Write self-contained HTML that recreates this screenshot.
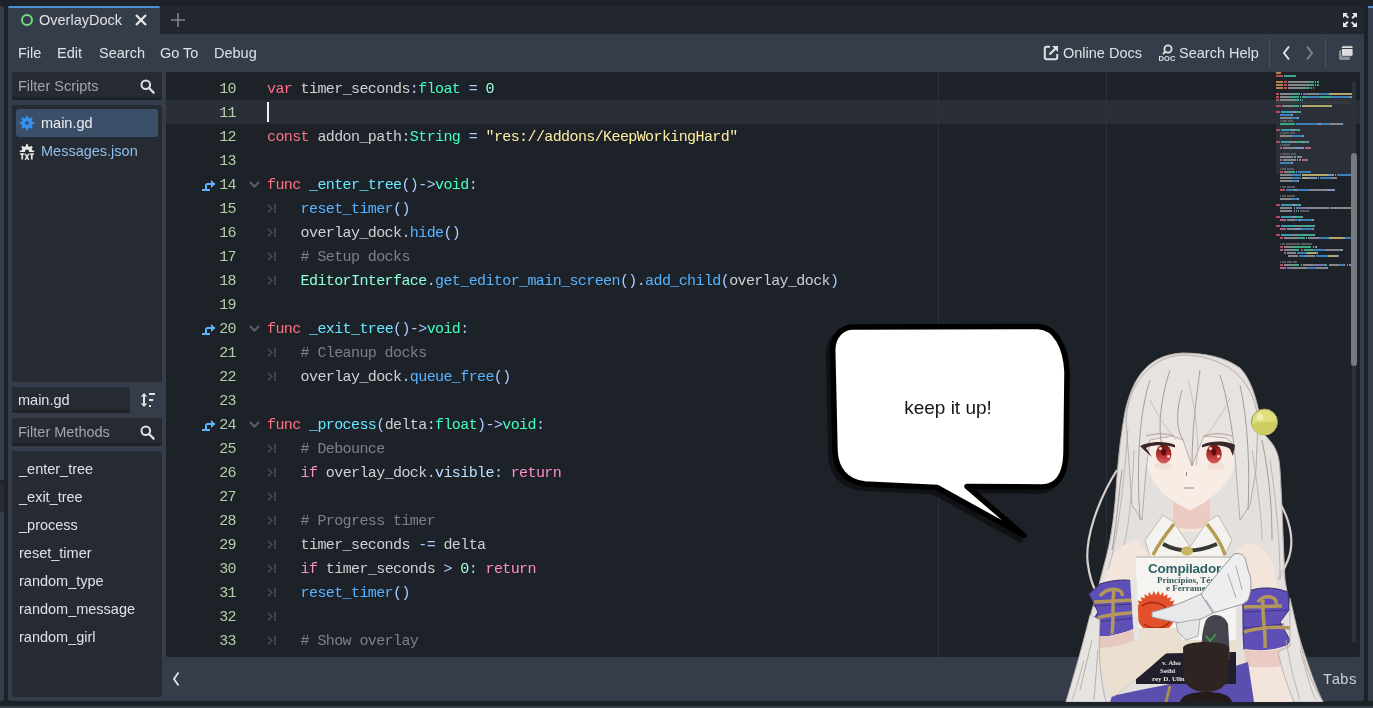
<!DOCTYPE html>
<html><head><meta charset="utf-8">
<style>
*{margin:0;padding:0;box-sizing:border-box}
html,body{width:1373px;height:708px;overflow:hidden;background:#1d2128;-webkit-font-smoothing:antialiased;font-family:"Liberation Sans",sans-serif;position:relative}
.a{position:absolute}
.ui{font-family:"Liberation Sans",sans-serif;font-size:14.5px;color:#dfe1e4;white-space:nowrap;line-height:18px}
.panel{background:#363d4a}
.field{background:#262a32;border-radius:2px;border-bottom:3px solid #1f2329}
#mm i{position:absolute;height:2px;display:block}
.mono{font-family:"Liberation Mono",monospace;white-space:pre}
#code{position:absolute;left:166px;top:72px;width:1194px;height:585px;background:#1d2229;border-radius:2px;overflow:hidden}
.ln{position:absolute;left:0;width:70px;text-align:right;font-family:"Liberation Mono",monospace;font-size:15px;letter-spacing:-0.6px;color:#b2cfa8;height:24px;line-height:24px}
.cl{position:absolute;left:101px;font-family:"Liberation Mono",monospace;font-size:15px;letter-spacing:-0.6px;color:#cdcfd2;white-space:pre;height:24px;line-height:24px}
.k{color:#ff7085}.fd{color:#66e6ff}.s{color:#abc9ff}.t{color:#42ffc2}.f{color:#57b3ff}.c{color:#7d8085}.e{color:#8fffdb}.cf{color:#ff8ccc}.n{color:#a1ffe0}.st{color:#ffeda1}.m{color:#bce0ff}
</style></head><body><div id="root" style="position:absolute;left:0;top:0;width:1373px;height:708px;will-change:transform">
<!-- left strip -->
<div class="a panel" style="left:0;top:6px;width:4px;height:695px;border-radius:0 3px 3px 0"></div>
<div class="a" style="left:0;top:480px;width:4px;height:4px;background:#1d2128"></div>
<div class="a" style="left:0;top:484px;width:4px;height:28px;background:#272c35"></div>
<!-- right strip -->
<div class="a panel" style="left:1368px;top:6px;width:5px;height:695px"></div>
<div class="a" style="left:1368px;top:6px;width:5px;height:2px;background:#4d90cf"></div>
<!-- bottom strip -->
<div class="a panel" style="left:0;top:706px;width:1373px;height:2px"></div>
<!-- main panel -->
<div class="a panel" style="left:8px;top:6px;width:1356px;height:695px;border-radius:3px"></div>
<!-- tab bar bg -->
<div class="a" style="left:8px;top:6px;width:1356px;height:28px;background:#22262e;border-radius:3px 3px 0 0"></div>
<!-- tab -->
<div class="a panel" style="left:8px;top:6px;width:152px;height:28px;border-radius:3px 3px 0 0"></div>
<div class="a" style="left:8px;top:6px;width:152px;height:2px;background:#4d90cf;border-radius:2px 2px 0 0"></div>
<div class="a" style="left:21px;top:14px;width:12px;height:12px;border:2px solid #6ee07a;border-radius:50%"></div>
<div class="a ui" style="left:39px;top:11px;color:#dfe1e4">OverlayDock</div>
<svg class="a" style="left:134px;top:13px" width="14" height="14" viewBox="0 0 14 14"><path d="M2 2L12 12M12 2L2 12" stroke="#e8e8e8" stroke-width="2.2"/></svg>
<svg class="a" style="left:171px;top:13px" width="14" height="14" viewBox="0 0 14 14"><path d="M7 0V14M0 7H14" stroke="#80848c" stroke-width="1.6"/></svg>
<svg class="a" style="left:1342px;top:12px" width="16" height="16" viewBox="0 0 16 16" fill="#e8e8e8"><path d="M1 1h5l-1.6 1.6 2.6 2.6-1.4 1.4-2.6-2.6L1 6z M15 1v5l-1.6-1.6-2.6 2.6-1.4-1.4 2.6-2.6L10 1z M1 15v-5l1.6 1.6 2.6-2.6 1.4 1.4-2.6 2.6L6 15z M15 15h-5l1.6-1.6-2.6-2.6 1.4-1.4 2.6 2.6L15 10z"/></svg>

<!-- menu -->
<div class="a ui" style="left:18px;top:44px">File</div>
<div class="a ui" style="left:57px;top:44px">Edit</div>
<div class="a ui" style="left:99px;top:44px">Search</div>
<div class="a ui" style="left:160px;top:44px">Go To</div>
<div class="a ui" style="left:214px;top:44px">Debug</div>

<div class="a ui" style="left:1063px;top:44px">Online Docs</div>
<div class="a ui" style="left:1179px;top:44px">Search Help</div>
<div class="a" style="left:1269px;top:38px;width:1px;height:30px;background:#4a505c"></div>
<div class="a" style="left:1325px;top:38px;width:1px;height:30px;background:#4a505c"></div>

<!-- left panel -->
<div class="a field" style="left:12px;top:72px;width:150px;height:28px"></div>
<div class="a ui" style="left:18px;top:77px;color:#a3a6ab">Filter Scripts</div>
<div class="a" style="left:12px;top:105px;width:150px;height:277px;background:#262a32;border-radius:2px"></div>
<div class="a" style="left:16px;top:109px;width:142px;height:28px;background:#3b4f68;border-radius:3px"></div>
<div class="a ui" style="left:41px;top:114px;color:#eceef0">main.gd</div>
<div class="a ui" style="left:41px;top:142px;color:#8ec0ef">Messages.json</div>

<div class="a field" style="left:12px;top:387px;width:118px;height:26px"></div>
<div class="a ui" style="left:18px;top:391px">main.gd</div>
<div class="a field" style="left:12px;top:418px;width:150px;height:28px"></div>
<div class="a ui" style="left:18px;top:423px;color:#a3a6ab">Filter Methods</div>
<div class="a" style="left:12px;top:451px;width:150px;height:246px;background:#262a32;border-radius:2px"></div>
<div class="a ui" style="left:19px;top:460px">_enter_tree</div>
<div class="a ui" style="left:19px;top:488px">_exit_tree</div>
<div class="a ui" style="left:19px;top:516px">_process</div>
<div class="a ui" style="left:19px;top:544px">reset_timer</div>
<div class="a ui" style="left:19px;top:572px">random_type</div>
<div class="a ui" style="left:19px;top:600px">random_message</div>
<div class="a ui" style="left:19px;top:628px">random_girl</div>


<!-- gear main.gd -->
<svg class="a" style="left:19px;top:115px" width="16" height="16" viewBox="0 0 16 16"><path fill-rule="evenodd" fill="#3592ee" d="M6.74 2.75 L7.09 0.76 L8.91 0.76 L9.26 2.75 L10.82 3.40 L12.47 2.23 L13.77 3.53 L12.60 5.18 L13.25 6.74 L15.24 7.09 L15.24 8.91 L13.25 9.26 L12.60 10.82 L13.77 12.47 L12.47 13.77 L10.82 12.60 L9.26 13.25 L8.91 15.24 L7.09 15.24 L6.74 13.25 L5.18 12.60 L3.53 13.77 L2.23 12.47 L3.40 10.82 L2.75 9.26 L0.76 8.91 L0.76 7.09 L2.75 6.74 L3.40 5.18 L2.23 3.53 L3.53 2.23 L5.18 3.40Z M8 6.1A1.9 1.9 0 1 0 8 9.9A1.9 1.9 0 1 0 8 6.1Z"/></svg>
<!-- txt gear -->
<svg class="a" style="left:19px;top:142px" width="16" height="18" viewBox="0 0 16 18"><defs><clipPath id="gc"><rect x="0" y="0" width="16" height="10"/></clipPath></defs><path clip-path="url(#gc)" fill-rule="evenodd" fill="#e6e6e6" d="M6.74 4.35 L7.09 2.36 L8.91 2.36 L9.26 4.35 L10.82 5.00 L12.47 3.83 L13.77 5.13 L12.60 6.78 L13.25 8.34 L15.24 8.69 L15.24 10.51 L13.25 10.86 L12.60 12.42 L13.77 14.07 L12.47 15.37 L10.82 14.20 L9.26 14.85 L8.91 16.84 L7.09 16.84 L6.74 14.85 L5.18 14.20 L3.53 15.37 L2.23 14.07 L3.40 12.42 L2.75 10.86 L0.76 10.51 L0.76 8.69 L2.75 8.34 L3.40 6.78 L2.23 5.13 L3.53 3.83 L5.18 5.00Z M8 7.6A2 2 0 1 0 8 11.6A2 2 0 1 0 8 7.6Z"/><g fill="none" stroke="#e6e6e6" stroke-width="1.7"><path d="M1 12H5.4M3.2 12V17.6M10.6 12H15M12.8 12V17.6"/><path d="M6.2 11.8L9.8 17.8M9.8 11.8L6.2 17.8" stroke-width="1.5"/></g></svg>
<!-- search icons -->
<svg class="a" style="left:140px;top:79px" width="15" height="15" viewBox="0 0 15 15"><circle cx="5.8" cy="5.8" r="4.3" stroke="#e0e0e0" stroke-width="2" fill="none"/><path d="M8.8 8.8L13.6 13.6" stroke="#e0e0e0" stroke-width="2.2" stroke-linecap="round"/></svg>
<svg class="a" style="left:140px;top:425px" width="15" height="15" viewBox="0 0 15 15"><circle cx="5.8" cy="5.8" r="4.3" stroke="#e0e0e0" stroke-width="2" fill="none"/><path d="M8.8 8.8L13.6 13.6" stroke="#e0e0e0" stroke-width="2.2" stroke-linecap="round"/></svg>
<!-- sort icon -->
<svg class="a" style="left:140px;top:392px" width="17" height="16" viewBox="0 0 17 16" fill="#e4e4e4"><path d="M4 1L7.2 4.6H5V11.4H7.2L4 15L0.8 11.4H3V4.6H0.8Z"/><rect x="9" y="1" width="6" height="2"/><rect x="9" y="7" width="4.2" height="2"/><rect x="9" y="13" width="2" height="2"/></svg>
<!-- online docs icon -->
<svg class="a" style="left:1043px;top:45px" width="16" height="16" viewBox="0 0 16 16"><path d="M7 1.8H3.5Q1.8 1.8 1.8 3.5V12.5Q1.8 14.2 3.5 14.2H12.5Q14.2 14.2 14.2 12.5V9" stroke="#e0e0e0" stroke-width="2" fill="none"/><path d="M6.5 9.5L12.5 3.5" stroke="#e0e0e0" stroke-width="2.2"/><path d="M9 1H15V7Z" fill="#e0e0e0"/></svg>
<!-- doc search icon -->
<svg class="a" style="left:1158px;top:44px" width="18" height="18" viewBox="0 0 18 18"><circle cx="10" cy="5" r="3.6" stroke="#e0e0e0" stroke-width="1.8" fill="none"/><path d="M7.6 7.4L5 10" stroke="#e0e0e0" stroke-width="2"/><text x="9" y="17" text-anchor="middle" font-family="Liberation Sans" font-weight="bold" font-size="7.6" fill="#e0e0e0">DOC</text></svg>
<!-- arrows -->
<svg class="a" style="left:1281px;top:45px" width="10" height="16" viewBox="0 0 10 16"><path d="M8 1.5L3 8L8 14.5" stroke="#e4e4e4" stroke-width="2" fill="none"/></svg>
<svg class="a" style="left:1305px;top:45px" width="10" height="16" viewBox="0 0 10 16"><path d="M2 1.5L7 8L2 14.5" stroke="#7c8088" stroke-width="2" fill="none"/></svg>
<!-- window icon -->
<svg class="a" style="left:1338px;top:45px" width="17" height="17" viewBox="0 0 17 17"><rect x="1" y="5" width="11" height="10" rx="1.5" fill="#8e8f92"/><rect x="3.5" y="0.8" width="11.5" height="10.5" rx="1.5" fill="#dedede" stroke="#363d4a" stroke-width="0.8"/><rect x="3.5" y="3" width="11.5" height="1" fill="#363d4a"/></svg>
<!-- bottom left arrow -->
<svg class="a" style="left:171px;top:671px" width="10" height="16" viewBox="0 0 10 16"><path d="M7.5 1.5L3 8L7.5 14.5" stroke="#e4e4e4" stroke-width="1.8" fill="none"/></svg>

<!-- code editor -->
<div id="code">
<div class="a" style="left:0;top:28px;width:1194px;height:24px;background:#2a2e36"></div>
<div class="a" style="left:772px;top:0;width:1px;height:585px;background:#2c3039"></div>
<div class="a" style="left:940px;top:0;width:1px;height:585px;background:#2c3039"></div>
<div class="a" style="left:101px;top:30px;width:1.5px;height:20px;background:#f0f0f0"></div>
<div class="ln" style="top:6px">10</div>
<div class="cl" style="top:6px"><span class="k">var</span> timer_seconds<span class="s">:</span><span class="t">float</span><span class="s"> = </span><span class="n">0</span></div>
<div class="ln" style="top:30px">11</div>
<div class="cl" style="top:30px"></div>
<div class="ln" style="top:54px">12</div>
<div class="cl" style="top:54px"><span class="k">const</span> addon_path<span class="s">:</span><span class="t">String</span><span class="s"> = </span><span class="st">"res://addons/KeepWorkingHard"</span></div>
<div class="ln" style="top:78px">13</div>
<div class="cl" style="top:78px"></div>
<div class="ln" style="top:102px">14</div>
<div class="cl" style="top:102px"><span class="k">func</span> <span class="fd">_enter_tree</span><span class="s">()-&gt;</span><span class="t">void</span><span class="s">:</span></div>
<svg class="a" style="left:36px;top:107px" width="14" height="12" viewBox="0 0 14 12" fill="#5cb3ff"><path d="M0 10h8v2H0z M3 11V6.5Q3 4 5.5 4H9V1l4.5 4L9 9V6H5.5Q5 6 5 6.5V11z"/></svg>
<svg class="a" style="left:83px;top:109px" width="11" height="7" viewBox="0 0 11 7"><path d="M1 1L5.5 5.5L10 1" stroke="#5a5e66" stroke-width="2.2" fill="none"/></svg>
<div class="ln" style="top:126px">15</div>
<div class="cl" style="top:126px">    <span class="f">reset_timer</span><span class="s">()</span></div>
<svg class="a" style="left:101px;top:132px" width="10" height="9" viewBox="0 0 10 9"><path d="M1.2 0.8L4.6 4.5L1.2 8.2" stroke="#3c4350" stroke-width="2" fill="none"/><rect x="7" y="0" width="2" height="9" fill="#3c4350"/></svg>
<div class="ln" style="top:150px">16</div>
<div class="cl" style="top:150px">    overlay_dock<span class="s">.</span><span class="f">hide</span><span class="s">()</span></div>
<svg class="a" style="left:101px;top:156px" width="10" height="9" viewBox="0 0 10 9"><path d="M1.2 0.8L4.6 4.5L1.2 8.2" stroke="#3c4350" stroke-width="2" fill="none"/><rect x="7" y="0" width="2" height="9" fill="#3c4350"/></svg>
<div class="ln" style="top:174px">17</div>
<div class="cl" style="top:174px">    <span class="c"># Setup docks</span></div>
<svg class="a" style="left:101px;top:180px" width="10" height="9" viewBox="0 0 10 9"><path d="M1.2 0.8L4.6 4.5L1.2 8.2" stroke="#3c4350" stroke-width="2" fill="none"/><rect x="7" y="0" width="2" height="9" fill="#3c4350"/></svg>
<div class="ln" style="top:198px">18</div>
<div class="cl" style="top:198px">    <span class="e">EditorInterface</span><span class="s">.</span><span class="f">get_editor_main_screen</span><span class="s">().</span><span class="f">add_child</span><span class="s">(</span>overlay_dock<span class="s">)</span></div>
<svg class="a" style="left:101px;top:204px" width="10" height="9" viewBox="0 0 10 9"><path d="M1.2 0.8L4.6 4.5L1.2 8.2" stroke="#3c4350" stroke-width="2" fill="none"/><rect x="7" y="0" width="2" height="9" fill="#3c4350"/></svg>
<div class="ln" style="top:222px">19</div>
<div class="cl" style="top:222px"></div>
<div class="ln" style="top:246px">20</div>
<div class="cl" style="top:246px"><span class="k">func</span> <span class="fd">_exit_tree</span><span class="s">()-&gt;</span><span class="t">void</span><span class="s">:</span></div>
<svg class="a" style="left:36px;top:251px" width="14" height="12" viewBox="0 0 14 12" fill="#5cb3ff"><path d="M0 10h8v2H0z M3 11V6.5Q3 4 5.5 4H9V1l4.5 4L9 9V6H5.5Q5 6 5 6.5V11z"/></svg>
<svg class="a" style="left:83px;top:253px" width="11" height="7" viewBox="0 0 11 7"><path d="M1 1L5.5 5.5L10 1" stroke="#5a5e66" stroke-width="2.2" fill="none"/></svg>
<div class="ln" style="top:270px">21</div>
<div class="cl" style="top:270px">    <span class="c"># Cleanup docks</span></div>
<svg class="a" style="left:101px;top:276px" width="10" height="9" viewBox="0 0 10 9"><path d="M1.2 0.8L4.6 4.5L1.2 8.2" stroke="#3c4350" stroke-width="2" fill="none"/><rect x="7" y="0" width="2" height="9" fill="#3c4350"/></svg>
<div class="ln" style="top:294px">22</div>
<div class="cl" style="top:294px">    overlay_dock<span class="s">.</span><span class="f">queue_free</span><span class="s">()</span></div>
<svg class="a" style="left:101px;top:300px" width="10" height="9" viewBox="0 0 10 9"><path d="M1.2 0.8L4.6 4.5L1.2 8.2" stroke="#3c4350" stroke-width="2" fill="none"/><rect x="7" y="0" width="2" height="9" fill="#3c4350"/></svg>
<div class="ln" style="top:318px">23</div>
<div class="cl" style="top:318px"></div>
<div class="ln" style="top:342px">24</div>
<div class="cl" style="top:342px"><span class="k">func</span> <span class="fd">_process</span><span class="s">(</span>delta<span class="s">:</span><span class="t">float</span><span class="s">)-&gt;</span><span class="t">void</span><span class="s">:</span></div>
<svg class="a" style="left:36px;top:347px" width="14" height="12" viewBox="0 0 14 12" fill="#5cb3ff"><path d="M0 10h8v2H0z M3 11V6.5Q3 4 5.5 4H9V1l4.5 4L9 9V6H5.5Q5 6 5 6.5V11z"/></svg>
<svg class="a" style="left:83px;top:349px" width="11" height="7" viewBox="0 0 11 7"><path d="M1 1L5.5 5.5L10 1" stroke="#5a5e66" stroke-width="2.2" fill="none"/></svg>
<div class="ln" style="top:366px">25</div>
<div class="cl" style="top:366px">    <span class="c"># Debounce</span></div>
<svg class="a" style="left:101px;top:372px" width="10" height="9" viewBox="0 0 10 9"><path d="M1.2 0.8L4.6 4.5L1.2 8.2" stroke="#3c4350" stroke-width="2" fill="none"/><rect x="7" y="0" width="2" height="9" fill="#3c4350"/></svg>
<div class="ln" style="top:390px">26</div>
<div class="cl" style="top:390px">    <span class="cf">if</span> overlay_dock<span class="s">.</span><span class="m">visible</span><span class="s">: </span><span class="cf">return</span></div>
<svg class="a" style="left:101px;top:396px" width="10" height="9" viewBox="0 0 10 9"><path d="M1.2 0.8L4.6 4.5L1.2 8.2" stroke="#3c4350" stroke-width="2" fill="none"/><rect x="7" y="0" width="2" height="9" fill="#3c4350"/></svg>
<div class="ln" style="top:414px">27</div>
<div class="cl" style="top:414px"></div>
<svg class="a" style="left:101px;top:420px" width="10" height="9" viewBox="0 0 10 9"><path d="M1.2 0.8L4.6 4.5L1.2 8.2" stroke="#3c4350" stroke-width="2" fill="none"/><rect x="7" y="0" width="2" height="9" fill="#3c4350"/></svg>
<div class="ln" style="top:438px">28</div>
<div class="cl" style="top:438px">    <span class="c"># Progress timer</span></div>
<svg class="a" style="left:101px;top:444px" width="10" height="9" viewBox="0 0 10 9"><path d="M1.2 0.8L4.6 4.5L1.2 8.2" stroke="#3c4350" stroke-width="2" fill="none"/><rect x="7" y="0" width="2" height="9" fill="#3c4350"/></svg>
<div class="ln" style="top:462px">29</div>
<div class="cl" style="top:462px">    timer_seconds <span class="s">-=</span> delta</div>
<svg class="a" style="left:101px;top:468px" width="10" height="9" viewBox="0 0 10 9"><path d="M1.2 0.8L4.6 4.5L1.2 8.2" stroke="#3c4350" stroke-width="2" fill="none"/><rect x="7" y="0" width="2" height="9" fill="#3c4350"/></svg>
<div class="ln" style="top:486px">30</div>
<div class="cl" style="top:486px">    <span class="cf">if</span> timer_seconds <span class="s">></span> <span class="n">0</span><span class="s">: </span><span class="cf">return</span></div>
<svg class="a" style="left:101px;top:492px" width="10" height="9" viewBox="0 0 10 9"><path d="M1.2 0.8L4.6 4.5L1.2 8.2" stroke="#3c4350" stroke-width="2" fill="none"/><rect x="7" y="0" width="2" height="9" fill="#3c4350"/></svg>
<div class="ln" style="top:510px">31</div>
<div class="cl" style="top:510px">    <span class="f">reset_timer</span><span class="s">()</span></div>
<svg class="a" style="left:101px;top:516px" width="10" height="9" viewBox="0 0 10 9"><path d="M1.2 0.8L4.6 4.5L1.2 8.2" stroke="#3c4350" stroke-width="2" fill="none"/><rect x="7" y="0" width="2" height="9" fill="#3c4350"/></svg>
<div class="ln" style="top:534px">32</div>
<div class="cl" style="top:534px"></div>
<svg class="a" style="left:101px;top:540px" width="10" height="9" viewBox="0 0 10 9"><path d="M1.2 0.8L4.6 4.5L1.2 8.2" stroke="#3c4350" stroke-width="2" fill="none"/><rect x="7" y="0" width="2" height="9" fill="#3c4350"/></svg>
<div class="ln" style="top:558px">33</div>
<div class="cl" style="top:558px">    <span class="c"># Show overlay</span></div>
<svg class="a" style="left:101px;top:564px" width="10" height="9" viewBox="0 0 10 9"><path d="M1.2 0.8L4.6 4.5L1.2 8.2" stroke="#3c4350" stroke-width="2" fill="none"/><rect x="7" y="0" width="2" height="9" fill="#3c4350"/></svg>
<div class="ln" style="top:582px">34</div>
</div>
<div id="mm">
<div class="a" style="left:1276px;top:98px;width:80px;height:76px;background:#2b2f37"></div>
<div class="a" style="left:1276px;top:101px;width:80px;height:3px;background:#343840"></div>
<i style="left:1276px;top:72px;width:5px;background:#b57f4e"></i>
<i style="left:1276px;top:75px;width:7px;background:#b0505c"></i>
<i style="left:1284px;top:75px;width:12px;background:#3aa882"></i>
<i style="left:1276px;top:81px;width:7px;background:#b57f4e"></i>
<i style="left:1284px;top:81px;width:3px;background:#b0505c"></i>
<i style="left:1288px;top:81px;width:21px;background:#85878a"></i>
<i style="left:1309px;top:81px;width:5px;background:#3aa882"></i>
<i style="left:1315px;top:81px;width:1px;background:#7f93b8"></i>
<i style="left:1317px;top:81px;width:2px;background:#3aa882"></i>
<i style="left:1276px;top:84px;width:7px;background:#b57f4e"></i>
<i style="left:1284px;top:84px;width:3px;background:#b0505c"></i>
<i style="left:1288px;top:84px;width:21px;background:#85878a"></i>
<i style="left:1309px;top:84px;width:5px;background:#3aa882"></i>
<i style="left:1315px;top:84px;width:1px;background:#7f93b8"></i>
<i style="left:1317px;top:84px;width:2px;background:#3aa882"></i>
<i style="left:1276px;top:87px;width:7px;background:#b57f4e"></i>
<i style="left:1284px;top:87px;width:3px;background:#b0505c"></i>
<i style="left:1288px;top:87px;width:17px;background:#85878a"></i>
<i style="left:1305px;top:87px;width:5px;background:#3aa882"></i>
<i style="left:1311px;top:87px;width:1px;background:#7f93b8"></i>
<i style="left:1313px;top:87px;width:1px;background:#3aa882"></i>
<i style="left:1276px;top:93px;width:3px;background:#b0505c"></i>
<i style="left:1280px;top:93px;width:13px;background:#85878a"></i>
<i style="left:1293px;top:93px;width:7px;background:#3aa882"></i>
<i style="left:1301px;top:93px;width:1px;background:#7f93b8"></i>
<i style="left:1303px;top:93px;width:5px;background:#7572b0"></i>
<i style="left:1308px;top:93px;width:11px;background:#85878a"></i>
<i style="left:1319px;top:93px;width:10px;background:#3e7fb8"></i>
<i style="left:1329px;top:93px;width:25px;background:#b3a76a"></i>
<i style="left:1276px;top:96px;width:3px;background:#b0505c"></i>
<i style="left:1280px;top:96px;width:9px;background:#85878a"></i>
<i style="left:1289px;top:96px;width:10px;background:#3aa882"></i>
<i style="left:1300px;top:96px;width:1px;background:#7f93b8"></i>
<i style="left:1302px;top:96px;width:5px;background:#3aa882"></i>
<i style="left:1307px;top:96px;width:13px;background:#3e7fb8"></i>
<i style="left:1320px;top:96px;width:11px;background:#3aa882"></i>
<i style="left:1331px;top:96px;width:18px;background:#3e7fb8"></i>
<i style="left:1349px;top:96px;width:5px;background:#85878a"></i>
<i style="left:1276px;top:99px;width:3px;background:#b0505c"></i>
<i style="left:1280px;top:99px;width:14px;background:#85878a"></i>
<i style="left:1294px;top:99px;width:5px;background:#3aa882"></i>
<i style="left:1300px;top:99px;width:1px;background:#7f93b8"></i>
<i style="left:1302px;top:99px;width:1px;background:#3aa882"></i>
<i style="left:1276px;top:105px;width:5px;background:#b0505c"></i>
<i style="left:1282px;top:105px;width:11px;background:#85878a"></i>
<i style="left:1293px;top:105px;width:6px;background:#3aa882"></i>
<i style="left:1300px;top:105px;width:1px;background:#7f93b8"></i>
<i style="left:1302px;top:105px;width:30px;background:#b3a76a"></i>
<i style="left:1276px;top:111px;width:4px;background:#b0505c"></i>
<i style="left:1281px;top:111px;width:11px;background:#3a9bb0"></i>
<i style="left:1292px;top:111px;width:4px;background:#7f93b8"></i>
<i style="left:1296px;top:111px;width:4px;background:#3aa882"></i>
<i style="left:1300px;top:111px;width:1px;background:#7f93b8"></i>
<i style="left:1280px;top:114px;width:11px;background:#3e7fb8"></i>
<i style="left:1291px;top:114px;width:2px;background:#7f93b8"></i>
<i style="left:1280px;top:117px;width:12px;background:#85878a"></i>
<i style="left:1292px;top:117px;width:5px;background:#3e7fb8"></i>
<i style="left:1297px;top:117px;width:2px;background:#7f93b8"></i>
<i style="left:1280px;top:120px;width:1px;background:#55585c"></i>
<i style="left:1282px;top:120px;width:5px;background:#55585c"></i>
<i style="left:1288px;top:120px;width:5px;background:#55585c"></i>
<i style="left:1280px;top:123px;width:15px;background:#3aa882"></i>
<i style="left:1296px;top:123px;width:22px;background:#3e7fb8"></i>
<i style="left:1318px;top:123px;width:3px;background:#7f93b8"></i>
<i style="left:1321px;top:123px;width:9px;background:#3e7fb8"></i>
<i style="left:1330px;top:123px;width:12px;background:#85878a"></i>
<i style="left:1342px;top:123px;width:1px;background:#7f93b8"></i>
<i style="left:1276px;top:129px;width:4px;background:#b0505c"></i>
<i style="left:1281px;top:129px;width:10px;background:#3a9bb0"></i>
<i style="left:1291px;top:129px;width:4px;background:#7f93b8"></i>
<i style="left:1295px;top:129px;width:4px;background:#3aa882"></i>
<i style="left:1299px;top:129px;width:1px;background:#7f93b8"></i>
<i style="left:1280px;top:132px;width:1px;background:#55585c"></i>
<i style="left:1282px;top:132px;width:7px;background:#55585c"></i>
<i style="left:1290px;top:132px;width:5px;background:#55585c"></i>
<i style="left:1280px;top:135px;width:12px;background:#85878a"></i>
<i style="left:1292px;top:135px;width:10px;background:#3e7fb8"></i>
<i style="left:1302px;top:135px;width:2px;background:#7f93b8"></i>
<i style="left:1276px;top:141px;width:4px;background:#b0505c"></i>
<i style="left:1281px;top:141px;width:8px;background:#3a9bb0"></i>
<i style="left:1289px;top:141px;width:1px;background:#7f93b8"></i>
<i style="left:1290px;top:141px;width:5px;background:#85878a"></i>
<i style="left:1295px;top:141px;width:1px;background:#7f93b8"></i>
<i style="left:1296px;top:141px;width:5px;background:#3aa882"></i>
<i style="left:1301px;top:141px;width:3px;background:#7f93b8"></i>
<i style="left:1304px;top:141px;width:4px;background:#3aa882"></i>
<i style="left:1308px;top:141px;width:1px;background:#7f93b8"></i>
<i style="left:1280px;top:144px;width:1px;background:#55585c"></i>
<i style="left:1282px;top:144px;width:8px;background:#55585c"></i>
<i style="left:1280px;top:147px;width:2px;background:#b0608f"></i>
<i style="left:1283px;top:147px;width:12px;background:#85878a"></i>
<i style="left:1295px;top:147px;width:1px;background:#7f93b8"></i>
<i style="left:1296px;top:147px;width:7px;background:#7f93b8"></i>
<i style="left:1303px;top:147px;width:1px;background:#7f93b8"></i>
<i style="left:1305px;top:147px;width:6px;background:#b0608f"></i>
<i style="left:1280px;top:153px;width:1px;background:#55585c"></i>
<i style="left:1282px;top:153px;width:8px;background:#55585c"></i>
<i style="left:1291px;top:153px;width:5px;background:#55585c"></i>
<i style="left:1280px;top:156px;width:13px;background:#85878a"></i>
<i style="left:1294px;top:156px;width:2px;background:#7f93b8"></i>
<i style="left:1297px;top:156px;width:5px;background:#85878a"></i>
<i style="left:1280px;top:159px;width:2px;background:#b0608f"></i>
<i style="left:1283px;top:159px;width:13px;background:#85878a"></i>
<i style="left:1297px;top:159px;width:1px;background:#7f93b8"></i>
<i style="left:1299px;top:159px;width:1px;background:#3aa882"></i>
<i style="left:1300px;top:159px;width:1px;background:#7f93b8"></i>
<i style="left:1302px;top:159px;width:6px;background:#b0608f"></i>
<i style="left:1280px;top:162px;width:11px;background:#3e7fb8"></i>
<i style="left:1291px;top:162px;width:2px;background:#7f93b8"></i>
<i style="left:1280px;top:168px;width:1px;background:#55585c"></i>
<i style="left:1282px;top:168px;width:4px;background:#55585c"></i>
<i style="left:1287px;top:168px;width:7px;background:#55585c"></i>
<i style="left:1280px;top:171px;width:3px;background:#b0505c"></i>
<i style="left:1284px;top:171px;width:5px;background:#85878a"></i>
<i style="left:1289px;top:171px;width:6px;background:#3aa882"></i>
<i style="left:1296px;top:171px;width:1px;background:#7f93b8"></i>
<i style="left:1298px;top:171px;width:13px;background:#3e7fb8"></i>
<i style="left:1280px;top:174px;width:12px;background:#85878a"></i>
<i style="left:1292px;top:174px;width:9px;background:#3e7fb8"></i>
<i style="left:1302px;top:174px;width:26px;background:#b3a76a"></i>
<i style="left:1328px;top:174px;width:6px;background:#7f93b8"></i>
<i style="left:1335px;top:174px;width:1px;background:#7f93b8"></i>
<i style="left:1337px;top:174px;width:14px;background:#3e7fb8"></i>
<i style="left:1351px;top:174px;width:3px;background:#85878a"></i>
<i style="left:1280px;top:177px;width:12px;background:#85878a"></i>
<i style="left:1292px;top:177px;width:9px;background:#3e7fb8"></i>
<i style="left:1302px;top:177px;width:6px;background:#b3a76a"></i>
<i style="left:1308px;top:177px;width:9px;background:#7f93b8"></i>
<i style="left:1318px;top:177px;width:1px;background:#7f93b8"></i>
<i style="left:1320px;top:177px;width:11px;background:#3e7fb8"></i>
<i style="left:1331px;top:177px;width:6px;background:#85878a"></i>
<i style="left:1280px;top:180px;width:12px;background:#85878a"></i>
<i style="left:1292px;top:180px;width:5px;background:#3e7fb8"></i>
<i style="left:1297px;top:180px;width:2px;background:#7f93b8"></i>
<i style="left:1280px;top:186px;width:1px;background:#55585c"></i>
<i style="left:1282px;top:186px;width:4px;background:#55585c"></i>
<i style="left:1287px;top:186px;width:8px;background:#55585c"></i>
<i style="left:1280px;top:189px;width:5px;background:#b0505c"></i>
<i style="left:1286px;top:189px;width:8px;background:#3e7fb8"></i>
<i style="left:1294px;top:189px;width:3px;background:#7f93b8"></i>
<i style="left:1297px;top:189px;width:12px;background:#3e7fb8"></i>
<i style="left:1309px;top:189px;width:17px;background:#85878a"></i>
<i style="left:1326px;top:189px;width:9px;background:#7f93b8"></i>
<i style="left:1280px;top:195px;width:1px;background:#55585c"></i>
<i style="left:1282px;top:195px;width:4px;background:#55585c"></i>
<i style="left:1287px;top:195px;width:8px;background:#55585c"></i>
<i style="left:1280px;top:198px;width:12px;background:#85878a"></i>
<i style="left:1292px;top:198px;width:5px;background:#3e7fb8"></i>
<i style="left:1297px;top:198px;width:2px;background:#7f93b8"></i>
<i style="left:1276px;top:204px;width:4px;background:#b0505c"></i>
<i style="left:1281px;top:204px;width:11px;background:#3a9bb0"></i>
<i style="left:1292px;top:204px;width:4px;background:#7f93b8"></i>
<i style="left:1296px;top:204px;width:4px;background:#3aa882"></i>
<i style="left:1300px;top:204px;width:1px;background:#7f93b8"></i>
<i style="left:1280px;top:207px;width:12px;background:#85878a"></i>
<i style="left:1294px;top:207px;width:1px;background:#7f93b8"></i>
<i style="left:1296px;top:207px;width:11px;background:#7572b0"></i>
<i style="left:1307px;top:207px;width:21px;background:#85878a"></i>
<i style="left:1328px;top:207px;width:1px;background:#7f93b8"></i>
<i style="left:1330px;top:207px;width:21px;background:#85878a"></i>
<i style="left:1351px;top:207px;width:1px;background:#7f93b8"></i>
<i style="left:1280px;top:210px;width:12px;background:#85878a"></i>
<i style="left:1294px;top:210px;width:1px;background:#7f93b8"></i>
<i style="left:1296px;top:210px;width:1px;background:#3aa882"></i>
<i style="left:1298px;top:210px;width:1px;background:#85878a"></i>
<i style="left:1300px;top:210px;width:9px;background:#55585c"></i>
<i style="left:1276px;top:216px;width:4px;background:#b0505c"></i>
<i style="left:1281px;top:216px;width:11px;background:#3a9bb0"></i>
<i style="left:1292px;top:216px;width:4px;background:#7f93b8"></i>
<i style="left:1296px;top:216px;width:6px;background:#3aa882"></i>
<i style="left:1302px;top:216px;width:1px;background:#7f93b8"></i>
<i style="left:1280px;top:219px;width:6px;background:#b0608f"></i>
<i style="left:1287px;top:219px;width:8px;background:#85878a"></i>
<i style="left:1295px;top:219px;width:4px;background:#3e7fb8"></i>
<i style="left:1299px;top:219px;width:2px;background:#7f93b8"></i>
<i style="left:1301px;top:219px;width:11px;background:#3e7fb8"></i>
<i style="left:1312px;top:219px;width:2px;background:#7f93b8"></i>
<i style="left:1276px;top:225px;width:4px;background:#b0505c"></i>
<i style="left:1281px;top:225px;width:14px;background:#3a9bb0"></i>
<i style="left:1295px;top:225px;width:5px;background:#85878a"></i>
<i style="left:1300px;top:225px;width:6px;background:#3aa882"></i>
<i style="left:1306px;top:225px;width:2px;background:#7f93b8"></i>
<i style="left:1308px;top:225px;width:6px;background:#3aa882"></i>
<i style="left:1314px;top:225px;width:1px;background:#7f93b8"></i>
<i style="left:1280px;top:228px;width:6px;background:#b0608f"></i>
<i style="left:1287px;top:228px;width:7px;background:#85878a"></i>
<i style="left:1294px;top:228px;width:7px;background:#7f93b8"></i>
<i style="left:1301px;top:228px;width:11px;background:#3e7fb8"></i>
<i style="left:1312px;top:228px;width:2px;background:#7f93b8"></i>
<i style="left:1276px;top:234px;width:4px;background:#b0505c"></i>
<i style="left:1281px;top:234px;width:11px;background:#3a9bb0"></i>
<i style="left:1292px;top:234px;width:5px;background:#85878a"></i>
<i style="left:1297px;top:234px;width:6px;background:#3aa882"></i>
<i style="left:1303px;top:234px;width:2px;background:#7f93b8"></i>
<i style="left:1305px;top:234px;width:9px;background:#3aa882"></i>
<i style="left:1314px;top:234px;width:1px;background:#7f93b8"></i>
<i style="left:1280px;top:237px;width:3px;background:#b0505c"></i>
<i style="left:1284px;top:237px;width:14px;background:#85878a"></i>
<i style="left:1298px;top:237px;width:7px;background:#3aa882"></i>
<i style="left:1306px;top:237px;width:1px;background:#7f93b8"></i>
<i style="left:1308px;top:237px;width:11px;background:#85878a"></i>
<i style="left:1319px;top:237px;width:10px;background:#3e7fb8"></i>
<i style="left:1329px;top:237px;width:14px;background:#b3a76a"></i>
<i style="left:1343px;top:237px;width:2px;background:#7f93b8"></i>
<i style="left:1345px;top:237px;width:9px;background:#3e7fb8"></i>
<i style="left:1280px;top:243px;width:1px;background:#55585c"></i>
<i style="left:1282px;top:243px;width:3px;background:#55585c"></i>
<i style="left:1286px;top:243px;width:4px;background:#55585c"></i>
<i style="left:1290px;top:243px;width:6px;background:#55585c"></i>
<i style="left:1296px;top:243px;width:4px;background:#55585c"></i>
<i style="left:1301px;top:243px;width:6px;background:#55585c"></i>
<i style="left:1307px;top:243px;width:5px;background:#55585c"></i>
<i style="left:1280px;top:246px;width:3px;background:#b0505c"></i>
<i style="left:1284px;top:246px;width:10px;background:#85878a"></i>
<i style="left:1294px;top:246px;width:17px;background:#3aa882"></i>
<i style="left:1313px;top:246px;width:1px;background:#7f93b8"></i>
<i style="left:1315px;top:246px;width:2px;background:#7f93b8"></i>
<i style="left:1280px;top:249px;width:3px;background:#b0608f"></i>
<i style="left:1284px;top:249px;width:9px;background:#85878a"></i>
<i style="left:1293px;top:249px;width:6px;background:#3aa882"></i>
<i style="left:1301px;top:249px;width:2px;background:#b0505c"></i>
<i style="left:1304px;top:249px;width:9px;background:#3aa882"></i>
<i style="left:1313px;top:249px;width:13px;background:#3e7fb8"></i>
<i style="left:1326px;top:249px;width:15px;background:#85878a"></i>
<i style="left:1341px;top:249px;width:2px;background:#7f93b8"></i>
<i style="left:1284px;top:252px;width:2px;background:#b0608f"></i>
<i style="left:1287px;top:252px;width:9px;background:#85878a"></i>
<i style="left:1297px;top:252px;width:10px;background:#3e7fb8"></i>
<i style="left:1307px;top:252px;width:9px;background:#b3a76a"></i>
<i style="left:1316px;top:252px;width:2px;background:#7f93b8"></i>
<i style="left:1288px;top:255px;width:10px;background:#85878a"></i>
<i style="left:1299px;top:255px;width:6px;background:#3e7fb8"></i>
<i style="left:1305px;top:255px;width:10px;background:#85878a"></i>
<i style="left:1316px;top:255px;width:12px;background:#3e7fb8"></i>
<i style="left:1328px;top:255px;width:9px;background:#b3a76a"></i>
<i style="left:1337px;top:255px;width:2px;background:#7f93b8"></i>
<i style="left:1280px;top:261px;width:1px;background:#55585c"></i>
<i style="left:1282px;top:261px;width:4px;background:#55585c"></i>
<i style="left:1287px;top:261px;width:5px;background:#55585c"></i>
<i style="left:1293px;top:261px;width:4px;background:#55585c"></i>
<i style="left:1280px;top:264px;width:3px;background:#b0505c"></i>
<i style="left:1284px;top:264px;width:9px;background:#85878a"></i>
<i style="left:1293px;top:264px;width:6px;background:#3aa882"></i>
<i style="left:1301px;top:264px;width:1px;background:#7f93b8"></i>
<i style="left:1303px;top:264px;width:10px;background:#85878a"></i>
<i style="left:1313px;top:264px;width:12px;background:#7572b0"></i>
<i style="left:1325px;top:264px;width:2px;background:#3aa882"></i>
<i style="left:1329px;top:264px;width:10px;background:#85878a"></i>
<i style="left:1339px;top:264px;width:5px;background:#3e7fb8"></i>
<i style="left:1344px;top:264px;width:1px;background:#7f93b8"></i>
<i style="left:1347px;top:264px;width:1px;background:#7f93b8"></i>
<i style="left:1349px;top:264px;width:1px;background:#3aa882"></i>
<i style="left:1350px;top:264px;width:2px;background:#7f93b8"></i>
<i style="left:1280px;top:267px;width:6px;background:#b0608f"></i>
<i style="left:1287px;top:267px;width:5px;background:#7572b0"></i>
<i style="left:1292px;top:267px;width:15px;background:#85878a"></i>
<i style="left:1307px;top:267px;width:9px;background:#3e7fb8"></i>
<i style="left:1316px;top:267px;width:10px;background:#85878a"></i>
<i style="left:1326px;top:267px;width:2px;background:#7f93b8"></i>
<div class="a" style="left:1352px;top:81px;width:4px;height:562px;background:#2c3139;border-radius:2px"></div>
<div class="a" style="left:1351px;top:153px;width:6px;height:213px;background:#76797e;border-radius:3px"></div>
</div>
<div class="a mono" style="left:1323px;top:672px;font-size:15px;letter-spacing:-0.6px;color:#cdcfd2">Tabs</div>
<!-- bubble -->
<svg class="a" style="left:0;top:0" width="1373" height="708" viewBox="0 0 1373 708">
<path fill="#0f1115" stroke="#0f1115" stroke-width="5.5" stroke-linejoin="round" transform="translate(-4,4)" d="M853 327L1038 326.5C1056 327 1066 348 1067 372L1066 455C1065 475 1058 487 1042 487L967 486.5L1024 535.5L937 487.5L865 484C845 482 836 468 835 452L832.7 350C832.7 337 841 327 853 327Z"/>
<path fill="#ffffff" stroke="#000000" stroke-width="5.5" stroke-linejoin="round" d="M853 327L1038 326.5C1056 327 1066 348 1067 372L1066 455C1065 475 1058 487 1042 487L967 486.5L1024 535.5L937 487.5L865 484C845 482 836 468 835 452L832.7 350C832.7 337 841 327 853 327Z"/>
<text x="948" y="414" text-anchor="middle" font-family="Liberation Sans" font-size="19" fill="#161616">keep it up!</text>
</svg>
<!-- girl -->
<svg class="a" style="left:0;top:0" width="1373" height="702" viewBox="0 0 1373 702">
<defs>
<clipPath id="bookclip"><rect x="1136" y="556" width="100" height="128"/></clipPath>
</defs>
<!-- back hair -->
<path fill="#e4e0de" stroke="#b5aca8" stroke-width="1" d="M1182 353C1150 355 1133 375 1125 412C1120 440 1118 460 1116 490C1114 520 1110 545 1104 565C1098 590 1090 615 1084 640C1078 665 1070 688 1066 702L1323 702C1316 688 1308 665 1300 640C1294 620 1288 600 1285 580C1283 540 1282 500 1280 470C1279 452 1275 445 1262 432C1259 405 1252 380 1240 368C1225 357 1205 353 1182 353Z"/>

<!-- thin outer strands -->
<path fill="none" stroke="#d6d0cc" stroke-width="2.2" d="M1117 470C1098 500 1084 540 1088 565C1090 580 1094 588 1096 592"/>
<path fill="none" stroke="#d6d0cc" stroke-width="2.2" d="M1281 505C1292 525 1294 545 1288 560C1284 570 1280 576 1278 580"/>
<!-- neck -->
<path fill="#f4e6dc" d="M1173 494L1210 494L1211 532L1172 532Z"/>
<path fill="#ecccc2" d="M1173 499L1190 510L1210 498L1210 526C1198 530 1184 530 1173 526Z"/>
<!-- face -->
<path fill="#f7ede5" d="M1146 410L1236 410L1238 450C1236 468 1230 480 1218 492C1208 501 1198 507 1190 510C1182 507 1172 501 1162 492C1151 481 1146 468 1145 450Z"/>
<ellipse cx="1163" cy="466" rx="9" ry="4" fill="#f4e0da"/>
<ellipse cx="1216" cy="466" rx="9" ry="4" fill="#f4e0da"/>
<!-- shoulders -->
<path fill="#f3e5db" d="M1104 600C1104 570 1110 546 1137 539L1150 556L1140 600Z"/>
<path fill="#f3e5db" d="M1232 556L1246 542C1264 545 1276 556 1277 590L1277 600L1232 600Z"/>
<!-- collar -->
<path fill="#f4f2ef" stroke="#b8ad9c" stroke-width="0.8" d="M1145 540L1163 515L1174 522L1190 547L1207 522L1218 515L1232 540L1224 557L1150 557Z"/>
<path fill="none" stroke="#b49b50" stroke-width="3.5" d="M1174 524C1166 534 1158 545 1153 555M1207 524C1215 534 1222 545 1225 555"/>
<path fill="none" stroke="#38372f" stroke-width="4" d="M1163 544Q1187 557 1217 544"/>
<ellipse cx="1187" cy="551" rx="6" ry="4.5" fill="#c9b465"/>
<!-- armbands -->
<path fill="#5d4fb6" stroke="#3a3070" stroke-width="1" d="M1089 594L1100 584C1112 580 1124 579 1134 581L1136 628C1124 634 1108 640 1096 636L1092 622L1098 612Z"/>
<path fill="none" stroke="#3a3070" stroke-width="0.8" d="M1092 606L1134 604M1096 622L1136 618"/>
<path fill="none" stroke="#b4975a" stroke-width="3.5" d="M1100 596C1108 586 1124 588 1122 596M1114 590C1112 604 1114 618 1112 634M1094 602L1134 600M1098 618C1108 614 1124 614 1136 612"/>
<path fill="#5d4fb6" stroke="#3a3070" stroke-width="1" d="M1242 594C1252 588 1270 585 1288 592L1289 610L1280 622L1290 640L1284 650C1270 653 1256 652 1244 650C1242 630 1244 612 1242 594Z"/>
<path fill="none" stroke="#3a3070" stroke-width="0.8" d="M1244 612L1288 610M1244 628L1284 624"/>
<path fill="none" stroke="#b4975a" stroke-width="3.5" d="M1258 602C1264 594 1278 596 1276 604M1263 600C1262 616 1266 632 1265 648M1244 607L1282 606M1244 632C1256 628 1276 626 1290 628"/>
<!-- lower arms -->

<path fill="#e6c8be" d="M1094 636C1106 638 1122 634 1136 628L1136 640C1122 646 1106 648 1096 648Z"/>
<path fill="none" stroke="#b9a89c" stroke-width="0.9" d="M1136 640C1150 636 1165 632 1180 630M1113 697C1142 676 1162 656 1182 640"/>
<path fill="#f3e5db" d="M1244 649C1258 651 1275 651 1290 644L1292 702L1246 702Z"/>
<path fill="#e9cbc3" d="M1244 649C1258 652 1275 652 1290 645L1290 664C1276 668 1258 668 1245 666Z"/>
<!-- skirt -->
<path fill="#5a4fae" d="M1112 696C1140 690 1170 684 1190 680L1248 662L1254 702L1110 702Z"/>
<path fill="none" stroke="#a98f48" stroke-width="3" d="M1166 702L1170 686"/>
<!-- book -->
<rect x="1136" y="556" width="100" height="128" rx="1" fill="#f5f4f1"/>
<rect x="1136" y="556" width="100" height="2" fill="#cfccc6"/>
<g clip-path="url(#bookclip)">
<text x="1148" y="573" font-family="Liberation Sans" font-weight="bold" font-size="13.5" letter-spacing="-0.2" fill="#2f6266">Compiladores</text>
<text x="1157" y="583" font-family="Liberation Serif" font-weight="bold" font-size="9" fill="#3a5a5e">Princípios, Técnicas</text>
<text x="1166" y="591" font-family="Liberation Serif" font-weight="bold" font-size="9" fill="#3a5a5e">e Ferramentas</text>
<path fill="#e4502a" d="M1175.0 614.0 L1174.9 616.0 L1174.6 618.0 L1174.1 619.9 L1173.4 621.7 L1172.5 623.5 L1171.4 625.2 L1170.1 626.7 L1168.7 628.1 L1167.2 629.4 L1165.5 630.5 L1163.7 631.4 L1161.9 632.1 L1160.0 632.6 L1158.0 632.9 L1156.0 633.0 L1154.0 632.9 L1152.0 632.6 L1150.1 632.1 L1148.3 631.4 L1146.5 630.5 L1144.8 629.4 L1143.3 628.1 L1141.9 626.7 L1140.6 625.2 L1139.5 623.5 L1138.6 621.7 L1137.9 619.9 L1137.4 618.0 L1137.1 616.0 L1137.0 614.0 L1137.1 612.0 L1133.5 609.2 L1137.9 608.1 L1135.0 604.6 L1139.5 604.5 L1137.4 600.5 L1141.9 601.3 L1140.6 596.9 L1144.8 598.6 L1144.5 594.1 L1148.3 596.6 L1148.9 592.1 L1152.0 595.4 L1153.6 591.1 L1156.0 595.0 L1158.4 591.1 L1160.0 595.4 L1163.1 592.1 L1163.7 596.6 L1167.5 594.1 L1167.2 598.6 L1171.4 596.9 L1170.1 601.3 L1174.6 600.5 L1172.5 604.5 L1177.0 604.6 L1174.1 608.1 L1178.5 609.2 L1174.9 612.0Z"/>

<path fill="none" stroke="#a02a14" stroke-width="1.5" d="M1142 606C1150 600 1162 602 1168 610M1144 624C1152 630 1162 630 1170 622"/>
<path fill="#e8e0cc" d="M1160 640L1236 640L1236 684L1136 684L1136 645Z"/>
<path fill="#211f2b" d="M1136 654L1236 652L1236 686L1136 686Z"/>
<text x="1162" y="665" font-family="Liberation Serif" font-weight="bold" font-size="7" fill="#e8e4dc">v. Aho</text>
<text x="1160" y="673" font-family="Liberation Serif" font-weight="bold" font-size="7" fill="#e8e4dc">Sethi</text>
<text x="1152" y="681" font-family="Liberation Serif" font-weight="bold" font-size="7" fill="#e8e4dc">rey D. Ullm</text>
<path fill="#46434f" d="M1206 620C1212 612 1224 614 1228 624L1230 660L1204 660C1200 645 1202 630 1206 620Z"/>
<path fill="none" stroke="#3aa04a" stroke-width="1.8" d="M1206 636L1210 641L1216 634"/>
</g>
<path fill="#ebdfd0" d="M1094 636C1106 638 1122 634 1136 628L1180 628L1182 640C1162 656 1142 676 1113 697C1102 680 1096 660 1094 636Z"/>
<path fill="#e6c8be" d="M1094 636C1106 638 1122 634 1136 628L1136 640C1122 646 1106 648 1096 648Z"/>
<!-- glove arm -->
<path fill="#e9e9eb" stroke="#9a9aa0" stroke-width="1" d="M1152 612C1165 609 1180 604 1201 594L1213 613C1200 620 1190 624 1180 623C1170 621 1160 619 1152 617Z"/>
<path fill="#e4e4e6" stroke="#9a9aa0" stroke-width="0.8" d="M1176 623L1200 619L1198 636L1186 640L1178 632Z"/>
<path fill="#eeeef0" stroke="#9a9aa0" stroke-width="1" d="M1201 594L1222 568L1234 554C1240 552 1246 556 1246 562L1248 570C1252 578 1252 590 1248 600L1243 604L1213 613Z"/>
<path fill="none" stroke="#a4a4aa" stroke-width="0.9" d="M1236 566L1242 590M1228 574L1236 598M1206 600L1214 612"/>
<!-- mic -->
<path fill="#2e2422" d="M1183 648C1183 640 1229 640 1229 648L1228 678C1226 688 1216 692 1206 692C1196 692 1186 688 1184 678Z"/>
<path fill="#241c1b" d="M1180 702C1182 694 1194 692 1206 692C1218 692 1230 694 1232 702Z"/>
<!-- front hair strands -->
<path fill="#e7e3e1" stroke="#b0a8a4" stroke-width="0.8" d="M1090 615C1084 640 1074 675 1066 702L1106 702C1100 680 1098 650 1100 620Z"/>
<path fill="none" stroke="#a8a09c" stroke-width="0.8" d="M1092 640L1080 690M1098 650L1094 700"/>
<path fill="#e7e3e1" stroke="#b0a8a4" stroke-width="0.8" d="M1278 652C1282 670 1288 688 1294 702L1323 702C1312 684 1304 665 1300 640C1296 625 1293 610 1290 598L1290 646Z"/>
<path fill="#e8e4e2" d="M1130 578L1137 578L1139 640L1134 640Z"/>
<!-- bangs & side locks in front of face -->
<path fill="#e7e3e1" stroke="#a8a09c" stroke-width="0.8" d="M1126 420C1128 385 1150 357 1182 355C1220 355 1254 375 1258 420L1256 470L1250 505L1240 520L1236 470L1234 445L1226 438L1204 436L1192 466L1183 440L1172 436L1150 440L1146 470L1142 520L1132 505Z"/>
<g fill="none" stroke="#9d9490" stroke-width="0.9">
<path d="M1150 380C1140 410 1136 460 1140 520"/>
<path d="M1170 370C1160 400 1158 430 1162 445"/>
<path d="M1200 370C1196 400 1192 430 1192 466"/>
<path d="M1220 375C1228 400 1232 430 1234 445"/>
<path d="M1240 385C1248 420 1250 470 1248 510"/>
<path d="M1182 390C1176 410 1176 430 1183 440"/>
<path d="M1262 440C1270 480 1272 510 1272 540"/>
<path d="M1122 470C1118 500 1116 530 1112 550"/>
</g>
<g fill="none" stroke="#b4aaa6" stroke-width="0.8">
<path d="M1128 430C1124 480 1118 540 1108 570"/>
<path d="M1134 450C1132 500 1128 530 1124 545"/>
<path d="M1252 450C1258 490 1262 520 1262 540"/>
<path d="M1270 460C1276 500 1280 540 1280 580"/>
<path d="M1300 650C1306 670 1310 688 1316 700"/>
<path d="M1286 640C1290 665 1296 688 1300 700"/>
<path d="M1084 660C1080 675 1076 690 1072 700"/>
</g>
<g fill="none" stroke="#c6b4b0" stroke-width="0.8">
<path d="M1150 400C1160 420 1168 430 1176 440"/>
<path d="M1230 398C1220 418 1212 428 1204 438"/>
<path d="M1188 380C1196 410 1200 440 1196 466"/>
</g>
<!-- eyes -->
<defs><linearGradient id="iris" x1="0" y1="0" x2="0" y2="1"><stop offset="0" stop-color="#6e1414"/><stop offset="0.45" stop-color="#b02a2a"/><stop offset="1" stop-color="#d8605a"/></linearGradient></defs>
<ellipse cx="1163.7" cy="454" rx="7.8" ry="9.4" fill="url(#iris)"/>
<ellipse cx="1214" cy="454" rx="7.8" ry="9.4" fill="url(#iris)"/>
<ellipse cx="1163.7" cy="452" rx="2.5" ry="3.5" fill="#5a1010"/>
<ellipse cx="1214" cy="452" rx="2.5" ry="3.5" fill="#5a1010"/>
<circle cx="1160.5" cy="448.5" r="1.6" fill="#f4d8d8"/>
<circle cx="1168.5" cy="456.5" r="1.4" fill="#f4d8d8"/>
<circle cx="1210.5" cy="448.5" r="1.6" fill="#f4d8d8"/>
<circle cx="1218.5" cy="456.5" r="1.4" fill="#f4d8d8"/>
<path fill="#3a2828" d="M1140 446C1148 442 1164 440 1175 445L1175 447.5C1164 444 1150 445 1146 448L1152 457L1144 450Z"/>
<path fill="#3a2828" d="M1202 445C1212 440 1228 441 1235 445L1233 456L1230 449C1224 445 1212 444 1202 447.5Z"/>
<path fill="none" stroke="#a89490" stroke-width="0.9" d="M1146 436C1155 433 1166 433 1174 436M1204 436C1212 433 1224 433 1232 436"/>
<path fill="none" stroke="#8a7a78" stroke-width="0.9" d="M1186.5 472L1186.5 476M1184 488L1194 488"/>
<!-- ornament -->
<circle cx="1264.5" cy="422" r="13" fill="#dfe07c" stroke="#9a9850" stroke-width="1"/>
<path fill="#cfcd62" d="M1252 425C1258 420 1270 424 1277 420C1276 432 1270 435 1264.5 435C1258 435 1253 431 1252 425Z"/>
<circle cx="1260" cy="417" r="3.2" fill="#eef0b0"/>
</svg>

</div></body></html>
